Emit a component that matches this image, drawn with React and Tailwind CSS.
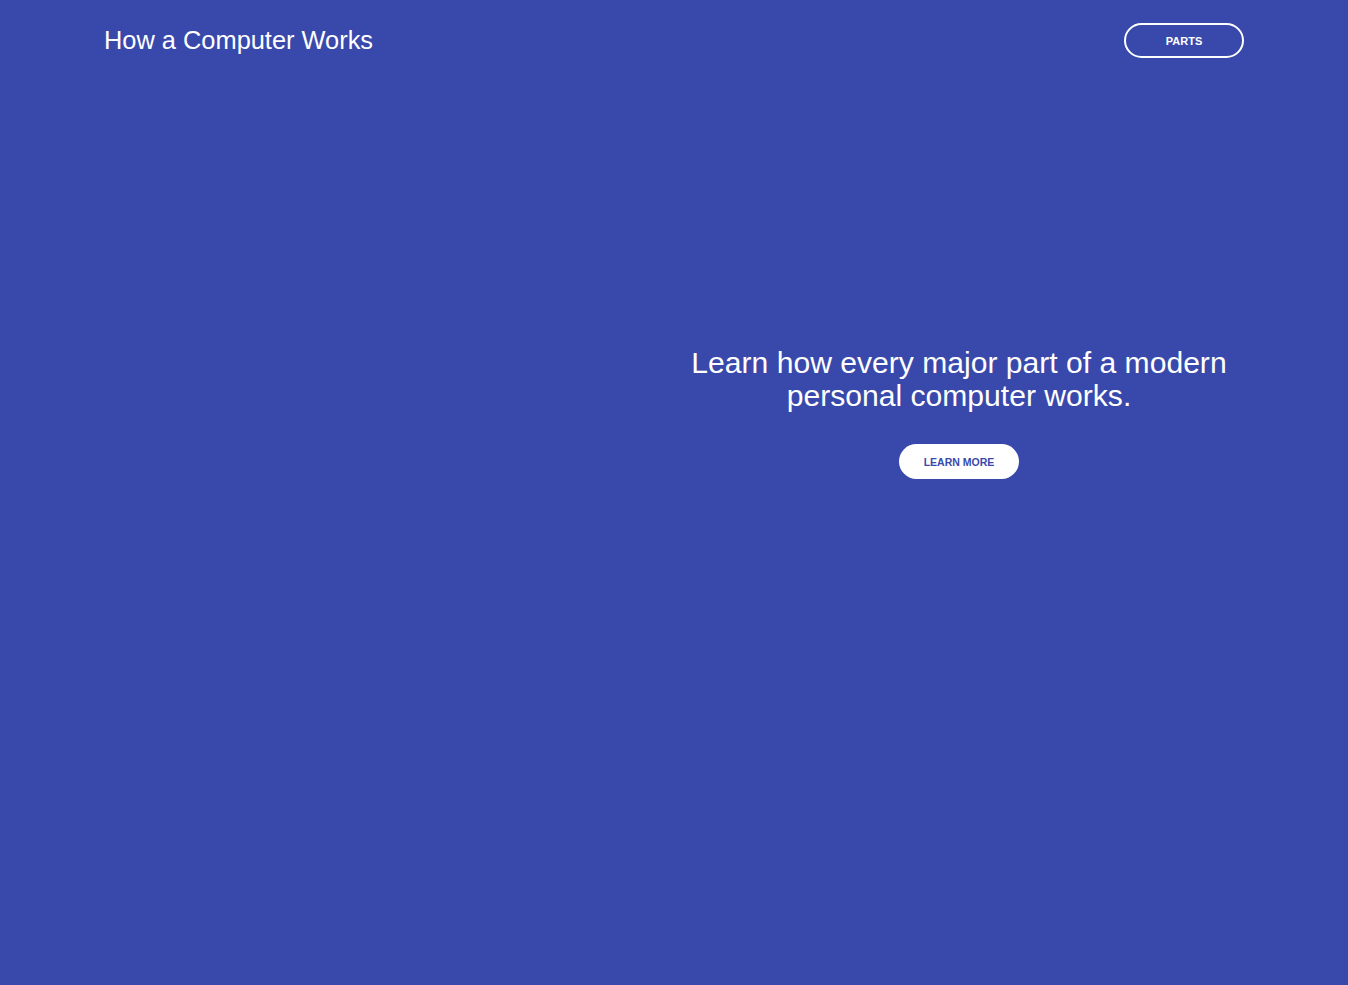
export default function App() {
  return (
    <div
      className="min-h-[985px] w-full bg-[#3949ab] text-white"
      style={{ fontFamily: '"Liberation Sans", Arial, sans-serif' }}
    >
      {/* Header */}
      <header className="mx-auto flex h-[81px] w-[1140px] items-center justify-between">
        <h1 className="mt-[1px] text-[25.4px] font-normal leading-none">How a Computer Works</h1>
        <button className="flex h-[35px] w-[120px] items-center justify-center rounded-full border-2 border-white pt-[2px] text-[11px] font-bold leading-none text-white">
          PARTS
        </button>
      </header>

      {/* Hero */}
      <main className="mx-auto mt-[265px] grid w-[1140px] grid-cols-2">
        <div />
        <div className="flex flex-col items-center text-center">
          <p className="text-[30.1px] leading-[33px]">
            Learn how every major part of a modern
            <br />
            personal computer works.
          </p>
          <button className="mt-[32px] flex h-[35px] w-[120px] items-center justify-center rounded-full bg-white pt-[2px] text-[10.5px] font-bold leading-none text-[#3949ab]">
            LEARN MORE
          </button>
        </div>
      </main>
    </div>
  )
}
